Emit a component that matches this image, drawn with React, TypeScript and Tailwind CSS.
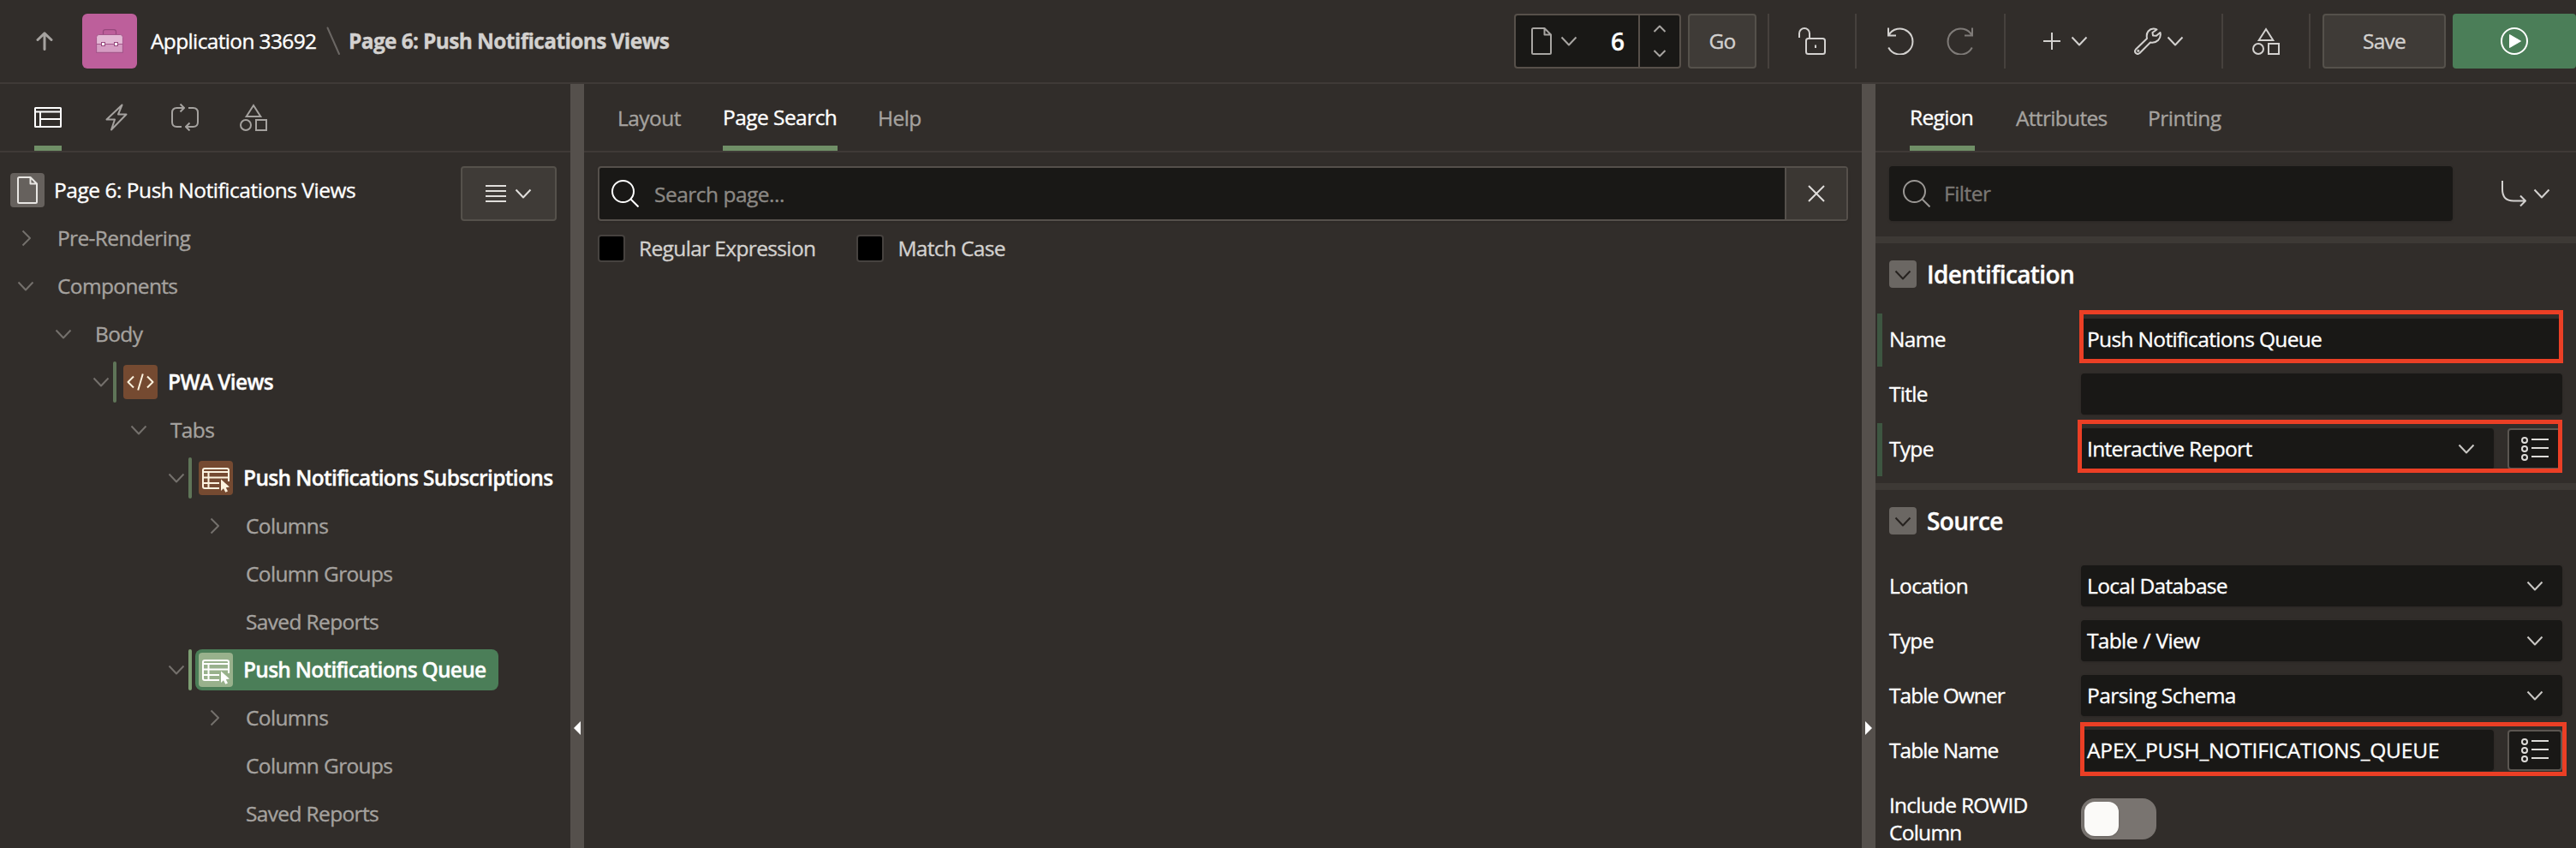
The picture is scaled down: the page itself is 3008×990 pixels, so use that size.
import React from "react";

type IconProps = { className?: string };

const stroke = {
  fill: "none",
  stroke: "currentColor",
  strokeWidth: 2,
  strokeLinejoin: "round" as const,
};

const ChevronDown = ({ className = "" }: IconProps) => (
  <svg width="20" height="12" viewBox="0 0 20 12" {...stroke} className={"shrink-0 " + className}>
    <path d="M1.500 1.500 10 10.500 18.500 1.500" />
  </svg>
);
const ChevronRight = ({ className = "" }: IconProps) => (
  <svg width="12" height="20" viewBox="0 0 12 20" {...stroke} className={"shrink-0 " + className}>
    <path d="M1.500 1.500 10 10 1.500 18.500" />
  </svg>
);
const ArrowUp = ({ className = "" }: IconProps) => (
  <svg width="20" height="22" viewBox="0 0 20 22" {...stroke} strokeWidth={3} strokeLinecap="round" className={className}>
    <path d="M10 20.500V2M2 9.500 10 1.800 18 9.500" />
  </svg>
);
const FileIcon = ({ className = "" }: IconProps) => (
  <svg width="24" height="32" viewBox="0 0 24 32" {...stroke} className={className}>
    <path d="M2.500 1H15.500L23 8.500V29.500Q23 31 21.500 31H2.500Q1 31 1 29.500V2.500Q1 1 2.500 1ZM15.500 1V8.500H23" />
  </svg>
);
const Shapes = ({ className = "" }: IconProps) => (
  <svg width="32" height="32" viewBox="0 0 32 32" {...stroke} strokeLinejoin="miter" className={className}>
    <path d="M16 2 24.300 15H7.700ZM19 19H31V31H19Z" />
    <circle cx="7" cy="25" r="6" />
  </svg>
);
const Search = ({ className = "" }: IconProps) => (
  <svg width="32" height="32" viewBox="0 0 32 32" {...stroke} className={"shrink-0 " + className}>
    <circle cx="13.500" cy="13.500" r="12.500" />
    <path d="M22.500 22.500 31.500 31.500" />
  </svg>
);
const PageTreeIcon = () => (
  <svg width="32" height="24" viewBox="0 0 32 24" {...stroke}>
    <rect x="1" y="1" width="30" height="22" rx="0.500" />
    <path d="M1 5.500H31M7 5.500V23M7 14H31" />
  </svg>
);
const Bolt = () => (
  <svg width="32" height="32" viewBox="0 0 32 32" {...stroke}>
    <path d="M22.500 1.500 4.500 18.500H14L10 30.500 27.500 12.500H18Z" />
  </svg>
);
const Loop = () => (
  <svg width="32" height="32" viewBox="0 0 32 32" {...stroke}>
    <path d="M12 27H6.500Q1 27 1 21.500V10.500Q1 5 6.500 5H15M20 5H25.500Q31 5 31 10.500V21.500Q31 27 25.500 27H17M10.500 .500 15 5 10.500 9.500M21.500 22.500 17 27 21.500 31.500" />
  </svg>
);
const Briefcase = () => (
  <svg width="32" height="28" viewBox="0 0 32 28" fill="none">
    <path d="M8.500 6.500V3Q8.500 .700 11 .700H21Q23.500 .700 23.500 3V6.500" stroke="#96477c" strokeWidth="1.200" />
    <path d="M.600 17.500V9.500Q.600 6.500 3.600 6.500H28.400Q31.400 6.500 31.400 9.500V17.500Z" fill="#e2b8d4" stroke="#a5568b" strokeWidth="1" />
    <path d="M.600 17.500H31.400V27.400H.600Z" fill="#d59cc2" stroke="#a5568b" strokeWidth="1.100" />
    <rect x="6.500" y="15.500" width="4" height="4" fill="#fff" stroke="#96477c" />
    <rect x="21.500" y="15.500" width="4" height="4" fill="#fff" stroke="#96477c" />
  </svg>
);
const Unlock = () => (
  <svg width="32" height="32" viewBox="0 0 32 32" {...stroke}>
    <rect x="9" y="13" width="22" height="18" rx="2.500" />
    <path d="M1 12V7A6 6 0 0 1 13 7V13M20 20.500V24" />
  </svg>
);
const Undo = ({ className = "" }: IconProps) => (
  <svg width="32" height="32" viewBox="0 0 32 32" {...stroke} className={className}>
    <path d="M2.200 9.500A15 15 0 1 1 2.200 23.500M2 .500V9.500H11" strokeLinejoin="miter" />
  </svg>
);
const Wrench = () => (
  <svg width="32" height="32" viewBox="0 0 32 32" {...stroke}>
    <path d="M26.500 2.500Q20.500 0 16.500 4.500Q14 7.500 15 13L2 25.500Q0 28 2 30Q4 32 6.500 30L19 17.500Q24.500 18.500 28 15Q31.800 11 30.500 6L26 9.800 22 9.500 21.500 6Z" />
    <circle cx="4.800" cy="27.300" r=".600" />
  </svg>
);
const Play = () => (
  <svg width="32" height="32" viewBox="0 0 32 32" {...stroke}>
    <circle cx="16" cy="16" r="15" />
    <path d="M10.500 8.500 23.500 16 10.500 23.500Z" fill="currentColor" strokeWidth="1" />
  </svg>
);
const CodeIcon = () => (
  <svg width="32" height="20" viewBox="0 0 32 20" {...stroke}>
    <path d="M8 3.500 1.500 10 8 16.500M24 3.500 30.500 10 24 16.500M18.800 .500 13.200 19.500" />
  </svg>
);
const ReportIcon = ({ className = "" }: IconProps) => (
  <svg width="32" height="29" viewBox="0 0 32 29" {...stroke} className={className}>
    <path d="M20 24H3Q1 24 1 22V3Q1 1 3 1H29Q31 1 31 3V16M1 5H31M1 11.500H31M1 18H20M7.500 5V24" />
    <path d="M22 13.500V27L25 24.300 27.300 28.800 30 27.500 27.800 23.300 32 22.500Z" fill="currentColor" stroke="none" />
  </svg>
);
const ListIcon = () => (
  <svg width="32" height="28" viewBox="0 0 32 28" {...stroke}>
    <circle cx="4" cy="4" r="3" />
    <circle cx="4" cy="14" r="3" />
    <circle cx="4" cy="24" r="3" />
    <path d="M12 3H32M12 13H32M12 23H32" />
  </svg>
);

const Divider = () => <div className="h-16 w-0.5 shrink-0 bg-[#46413d]" />;

function Header() {
  return (
    <header className="flex h-[98px] shrink-0 items-center border-b-2 border-[#3f3a37] text-[#d3d1cf]">
      <div className="flex w-[96px] justify-center pl-2 text-[#a5a29f]"><ArrowUp /></div>
      <div className="flex size-16 items-center justify-center rounded-md bg-[#bd5f9b]"><Briefcase /></div>
      <span className="ml-4 w-[195px] tracking-[-0.64px] whitespace-nowrap text-white">Application 33692</span>
      <svg width="17" height="34" viewBox="0 0 17 34" className="mr-[9px] ml-[10px]">
        <path d="M1.500 1.500 15 32" stroke="#6b6764" strokeWidth="2" strokeLinecap="round" />
      </svg>
      <span className="font-bold tracking-[-0.64px]">Page 6: Push Notifications Views</span>

      <div className="ml-auto flex items-center">
        <div className="flex h-16 w-[195px] rounded-sm border-2 border-[#57504a] bg-[#191816]">
          <div className="flex w-[143px] items-center pl-[18px]">
            <FileIcon className="text-[#a8a5a2]" />
            <ChevronDown className="ml-[10px] text-[#a8a5a2]" />
            <span className="ml-[39px] text-[28px] font-semibold text-white">6</span>
          </div>
          <div className="flex flex-1 flex-col items-center justify-between border-l-2 border-[#57504a] py-[11px] text-[#a8a5a2]">
            <svg width="16" height="9" viewBox="0 0 16 9" {...stroke}><path d="M1.500 8 8 1.500 14.500 8" /></svg>
            <svg width="16" height="9" viewBox="0 0 16 9" {...stroke}><path d="M1.500 1 8 7.500 14.500 1" /></svg>
          </div>
        </div>
        <div className="ml-2 flex h-16 w-20 items-center justify-center rounded-sm border-2 border-[#55514b] bg-[#3f3b37] font-medium tracking-[-0.8px]">Go</div>
        <div className="ml-[13px] flex"><Divider /></div>
        <div className="flex w-[100px] justify-center"><Unlock /></div>
        <Divider />
        <div className="flex w-[172px] items-center gap-[38px] pl-[35px]">
          <Undo />
          <Undo className="-scale-x-100 text-[#7f7b78]" />
        </div>
        <Divider />
        <div className="flex w-[252px] items-center pl-[44px]">
          <svg width="20" height="20" viewBox="0 0 20 20" {...stroke}><path d="M10 0V20M0 10H20" /></svg>
          <ChevronDown className="mr-[54px] ml-[12px]" />
          <Wrench />
          <ChevronDown className="ml-[6px]" />
        </div>
        <Divider />
        <div className="flex w-[100px] justify-center"><Shapes /></div>
        <Divider />
        <div className="ml-[14px] flex h-16 w-36 items-center justify-center rounded-sm border-2 border-[#55514b] bg-[#3f3b37] font-medium tracking-[-0.8px]">Save</div>
        <div className="ml-2 flex h-16 w-36 items-center justify-center rounded-sm bg-[#4b7e58] text-white"><Play /></div>
      </div>
    </header>
  );
}

const tabBar = "flex h-20 shrink-0 border-b-2 border-[#3f3a37] text-[#a5a29f]";
const tabOn = "flex items-center border-b-6 border-[#708f67] pt-1.5 text-white";

type Node = { d: number; t: string; open?: boolean; leaf?: boolean; icon?: "code" | "report"; on?: boolean };
const nodes: Node[] = [
  { d: 0, t: "Pre-Rendering" },
  { d: 0, t: "Components", open: true },
  { d: 1, t: "Body", open: true },
  { d: 2, t: "PWA Views", open: true, icon: "code" },
  { d: 3, t: "Tabs", open: true },
  { d: 4, t: "Push Notifications Subscriptions", open: true, icon: "report" },
  { d: 5, t: "Columns" },
  { d: 5, t: "Column Groups", leaf: true },
  { d: 5, t: "Saved Reports", leaf: true },
  { d: 4, t: "Push Notifications Queue", open: true, icon: "report", on: true },
  { d: 5, t: "Columns" },
  { d: 5, t: "Column Groups", leaf: true },
  { d: 5, t: "Saved Reports", leaf: true },
];

function TreeRow({ n }: { n: Node }) {
  return (
    <div className="flex h-14 items-center" style={{ paddingLeft: 14 + n.d * 44 }}>
      <div className="flex w-[30px] shrink-0 items-center pl-1.5 text-[#74706c]">
        {!n.leaf && (n.open ? <ChevronDown /> : <ChevronRight className="ml-[5px]" />)}
      </div>
      {n.icon ? (
        <>
          <div className={"h-12 w-1 rounded-sm " + (n.on ? "bg-[#7d9e72]" : "bg-[#5f7558]")} />
          <div className={"ml-1 flex h-12 items-center rounded-lg pr-[15px] pl-1 " + (n.on ? "bg-[#4b7e58]" : "")}>
            <div className={"flex size-10 items-center justify-center rounded-sm " + (n.on ? "bg-[#98b18c] text-white" : "bg-[#754a31] text-[#fdf3df]")}>
              {n.icon === "code" ? <CodeIcon /> : <ReportIcon className="mt-1" />}
            </div>
            <span className={"ml-3 font-semibold whitespace-nowrap text-white " + (n.on ? "tracking-[-0.74px]" : "tracking-[-0.66px]")}>{n.t}</span>
          </div>
        </>
      ) : (
        <span className="ml-[23px] tracking-[-0.64px] whitespace-nowrap text-[#a5a29f]">{n.t}</span>
      )}
    </div>
  );
}

function LeftPane() {
  return (
    <section className="flex w-[666px] shrink-0 flex-col">
      <div className={tabBar + " gap-12 pl-10"}>
        <div className={tabOn}><PageTreeIcon /></div>
        <div className="flex items-center"><Bolt /></div>
        <div className="flex items-center"><Loop /></div>
        <div className="flex items-center"><Shapes /></div>
      </div>
      <div className="flex h-[72px] items-center pt-4 pr-4 pl-3">
        <div className="flex size-10 items-center justify-center rounded-sm bg-[#66615d] text-[#e8e6e3]"><FileIcon /></div>
        <span className="ml-[11px] tracking-[-0.47px] text-white">Page 6: Push Notifications Views</span>
        <div className="mt-2 ml-auto flex h-16 w-28 items-center justify-center gap-2.5 rounded-sm border-2 border-[#55514b] bg-[#3f3b37] text-[#e0dedb]">
          <svg width="24" height="22" viewBox="0 0 24 22" {...stroke}><path d="M0 2H24M0 8H24M0 14H24M0 20H24" /></svg>
          <ChevronDown />
        </div>
      </div>
      <div>{nodes.map((n, i) => <TreeRow key={i} n={n} />)}</div>
    </section>
  );
}

function Check({ label }: { label: string }) {
  return (
    <div className="flex h-8 items-center gap-4">
      <div className="size-8 rounded-sm border-2 border-[#46423f] bg-black" />
      <span className="tracking-[-0.64px] text-[#d3d1cf]">{label}</span>
    </div>
  );
}

function MiddlePane() {
  return (
    <section className="flex w-[1492px] shrink-0 flex-col">
      <div className={tabBar + " pl-[39px] tracking-[-0.55px]"}>
        <div className="flex w-[123px] items-center pt-px">Layout</div>
        <div className={tabOn + " w-[134px] whitespace-nowrap"}>Page Search</div>
        <div className="ml-[47px] flex items-center pt-px">Help</div>
      </div>
      <div className="mx-4 mt-4 flex h-16 rounded-sm border-2 border-[#55504b] bg-[#191816] shadow">
        <div className="flex flex-1 items-center pl-3.5">
          <Search className="text-white" />
          <span className="mt-px ml-[18px] tracking-[-0.5px] text-[#8b8884]">Search page...</span>
        </div>
        <div className="flex w-[72px] items-center justify-center border-l-2 border-[#55504b] bg-[#3b3733] text-[#e0dedb]">
          <svg width="20" height="20" viewBox="0 0 20 20" {...stroke}><path d="M1 1 19 19M19 1 1 19" /></svg>
        </div>
      </div>
      <div className="mt-4 flex gap-12 pl-4">
        <Check label="Regular Expression" />
        <Check label="Match Case" />
      </div>
    </section>
  );
}

function Splitter({ right }: { right?: boolean }) {
  return (
    <div className="flex w-4 shrink-0 justify-center bg-[#55504c] pt-[744px]">
      <svg width="8" height="16" viewBox="0 0 8 16" fill="#fff">
        {right ? <path d="M0 0 8 8 0 16Z" /> : <path d="M8 0 0 8 8 16Z" />}
      </svg>
    </div>
  );
}

function SectionTitle({ children }: { children: React.ReactNode }) {
  return (
    <div className="flex h-20 shrink-0 items-center border-t-8 border-[#3d3935] pl-4">
      <div className="flex size-8 items-center justify-center rounded-sm bg-[#6b6763] text-[#26221f]"><ChevronDown className="mt-0.5" /></div>
      <span className="ml-3 text-[28px] font-semibold tracking-[-0.6px] text-white">{children}</span>
    </div>
  );
}

type FieldProps = { label: string; track?: string; value?: string; valueTrack?: string; select?: boolean; list?: boolean; changed?: boolean; mark?: string };
function Field({ label, track = "tracking-[-0.7px]", value, valueTrack = "tracking-[-0.66px]", select, list, changed, mark }: FieldProps) {
  return (
    <div className="relative flex h-16 items-center pr-4">
      <div className={"mt-0.5 h-[62px] w-1.5 self-start " + (changed ? "bg-[#3d5641]" : "")} />
      <span className={"w-[232px] pl-2 " + track}>{label}</span>
      <div className="flex h-12 flex-1 items-center justify-between rounded-sm bg-[#191816] pr-[22px] pl-[7px] shadow-sm">
        <span className={valueTrack}>{value}</span>
        {select && <ChevronDown className="text-[#c9c7c4]" />}
      </div>
      {list && (
        <div className="ml-4 flex h-12 w-16 items-center justify-center rounded-sm border-2 border-[#5b5651] bg-[#191816] text-[#dddbd8]"><ListIcon /></div>
      )}
      {mark && <div className={"absolute border-5 border-[#eb3f25] " + mark} />}
    </div>
  );
}

function RightPane() {
  return (
    <section className="flex w-[818px] shrink-0 flex-col">
      <div className={tabBar + " pl-10 tracking-[-0.68px]"}>
        <div className={tabOn + " w-[76px]"}>Region</div>
        <div className="ml-12 flex w-[106px] items-center pt-px">Attributes</div>
        <div className="ml-12 flex items-center pt-px tracking-[-0.45px]">Printing</div>
      </div>
      <div className="flex h-[98px] shrink-0 items-start pt-4 pl-4">
        <div className="flex h-16 w-[658px] items-center rounded-sm bg-[#191816] pl-4 text-[#7a7773] shadow">
          <Search className="text-[#9a9794]" />
          <span className="ml-4 tracking-[-0.5px]">Filter</span>
        </div>
        <div className="flex h-16 items-center pl-[57px] text-[#d3d1cf]">
          <svg width="30" height="32" viewBox="0 0 30 32" {...stroke}><path d="M1 1V11Q1 24.500 14 24.500H28M22 18.500 28 24.500 22 30.500" /></svg>
          <ChevronDown className="ml-[7px]" />
        </div>
      </div>
      <SectionTitle>Identification</SectionTitle>
      <div className="shrink-0 pt-2 pb-2 pl-0.5 text-white">
        <Field label="Name" value="Push Notifications Queue" changed mark="top-[-2px] left-[236px] h-[62px] w-[565px]" />
        <Field label="Title" />
        <Field label="Type" value="Interactive Report" select list changed mark="top-[-2px] left-[234px] h-[62px] w-[566px]" />
      </div>
      <SectionTitle>Source</SectionTitle>
      <div className="shrink-0 pt-2 pl-0.5 text-white">
        <Field label="Location" value="Local Database" select />
        <Field label="Type" value="Table / View" valueTrack="tracking-[-0.66px] [word-spacing:1px]" select />
        <Field label="Table Owner" track="tracking-[-0.95px]" value="Parsing Schema" valueTrack="tracking-[-0.52px]" select />
        <Field label="Table Name" track="tracking-[-0.95px]" value="APEX_PUSH_NOTIFICATIONS_QUEUE" valueTrack="tracking-[-0.15px]" list mark="top-[-1px] left-[237px] h-[63px] w-[568px]" />
        <div className="flex h-24 items-center">
          <span className="w-[232px] pr-8 pl-3.5 leading-8 tracking-[-0.75px]">Include ROWID Column</span>
          <div className="ml-1.5 flex h-12 w-[88px] items-center rounded-2xl bg-[#797470] p-1">
            <div className="size-10 rounded-xl bg-[#fbfaf8] shadow" />
          </div>
        </div>
      </div>
    </section>
  );
}

export default function App() {
  return (
    <div className="flex h-[990px] w-[3008px] flex-col overflow-hidden bg-[#312d2a] font-['Open_Sans','Noto_Sans',sans-serif] text-[24.5px] leading-9 [-webkit-text-stroke:0.35px_currentColor]">
      <Header />
      <div className="flex h-[892px] overflow-hidden">
        <LeftPane />
        <Splitter />
        <MiddlePane />
        <Splitter right />
        <RightPane />
      </div>
    </div>
  );
}
